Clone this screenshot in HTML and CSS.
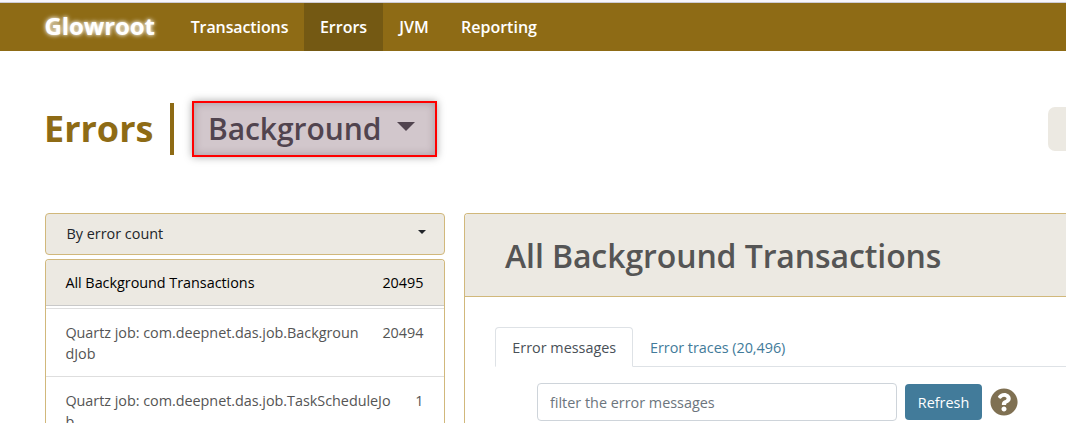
FILE: index.html
```html
<!DOCTYPE html>
<html lang="en">
<head>
<meta charset="utf-8">
<title>Glowroot</title>
<link rel="stylesheet" href="styles.css">
</head>
<body>
<nav class="navbar">
  <a class="brand">Glowroot</a>
  <a class="nav-item nav-transactions">Transactions</a>
  <a class="nav-item nav-errors active">Errors</a>
  <a class="nav-item nav-jvm">JVM</a>
  <a class="nav-item nav-reporting">Reporting</a>
</nav>
<header class="page-header">
  <h1 class="page-title">Errors</h1>
  <span class="divider"></span>
  <button class="type-button"><span class="type-label">Background</span><svg class="type-caret" width="18" height="9" viewBox="0 0 18 9"><path d="M0 0H18L9 9Z" fill="#51444f"/></svg></button>
  <span class="range-button"></span>
</header>
<main class="columns">
  <aside class="sidebar">
    <button class="sort-button"><span class="sort-label">By error count</span><svg width="8" height="4" viewBox="0 0 8 4"><path d="M0 0H8L4 4Z" fill="#212529"/></svg></button>
    <div class="list">
      <div class="row row-all"><span class="all-label">All Background Transactions</span><span>20495</span></div>
      <div class="row"><span>Quartz job: com.deepnet.das.job.Backgroun<br>dJob</span><span>20494</span></div>
      <div class="row"><span>Quartz job: com.deepnet.das.job.TaskScheduleJo<br>b</span><span>1</span></div>
    </div>
  </aside>
  <section class="panel">
    <div class="panel-header"><h2 class="panel-title">All Background Transactions</h2></div>
    <div class="tabs">
      <a class="tab tab-active">Error messages</a>
      <a class="tab tab-link">Error traces (20,496)</a>
    </div>
    <div class="filter">
      <input class="filter-input" type="text" placeholder="filter the error messages">
      <button class="refresh"><span>Refresh</span></button>
      <svg class="help" width="28" height="28" viewBox="0 0 512 512"><path fill="#7f7052" d="M504 256c0 136.997-111.043 248-248 248S8 392.997 8 256C8 119.083 119.043 8 256 8s248 111.083 248 248zM262.655 90c-54.497 0-89.255 22.957-116.549 63.758-3.536 5.286-2.353 12.415 2.715 16.258l34.699 26.31c5.205 3.947 12.621 3.008 16.665-2.122 17.864-22.658 30.113-35.797 57.303-35.797 20.429 0 45.698 13.148 45.698 32.958 0 14.976-12.363 22.667-32.534 33.976C247.128 238.528 216 254.941 216 296v4c0 6.627 5.373 12 12 12h56c6.627 0 12-5.373 12-12v-1.333c0-28.462 83.186-29.647 83.186-106.667 0-58.002-60.165-102-116.531-102zM256 338c-25.365 0-46 20.635-46 46 0 25.364 20.635 46 46 46s46-20.636 46-46c0-25.365-20.635-46-46-46z"/></svg>
    </div>
  </section>
</main>
</body>
</html>
```
FILE: styles.css
```css
* { box-sizing: border-box; }
html { overflow: hidden; }
body {
  margin: 0;
  height: 423px;
  overflow: hidden;
  background: #fff;
  border-top: 2px solid #f7f6fa;
  font: 14.4px/21px "Open Sans", "Noto Sans", sans-serif;
  color: #555;
}
button { font: inherit; margin: 0; padding: 0; }
h1, h2 { margin: 0; }
.navbar {
  display: flex;
  height: 49px;
  padding-left: 44.5px;
  border-top: 1px solid #cdccd5;
  background: #8e6b15;
  color: #fff;
}
.brand {
  width: 133.5px;
  font-size: 24px;
  font-weight: 700;
  line-height: 46px;
  letter-spacing: -.1px;
  text-shadow: 0 0 5px #fff, 0 0 3px rgba(255, 255, 255, .5);
}
.nav-item {
  font-size: 16px;
  font-weight: 600;
  line-height: 48px;
  text-align: center;
  white-space: nowrap;
}
.nav-transactions { width: 126px; padding-right: 3px; letter-spacing: -.1px; }
.nav-errors { width: 79px; }
.nav-jvm { width: 61px; padding-left: 1px; }
.nav-reporting { width: 110px; }
.active { background: #745913; }
.page-header {
  display: flex;
  height: 162px;
  padding-top: 50px;
  padding-left: 44px;
}
.page-title {
  width: 126px;
  flex: none;
  font-size: 36px;
  font-weight: 700;
  line-height: 56px;
  color: #8e6b15;
}
.divider {
  width: 4px;
  height: 52px;
  flex: none;
  margin: 2px 18px 0 0;
  background: #8e6b15;
}
.type-button {
  display: flex;
  align-items: center;
  width: 245px;
  height: 56px;
  flex: none;
  padding-left: 14px;
  border: 2px solid #f00;
  background: #d2c7cc;
  box-shadow: 0 0 8px rgba(0, 0, 0, .35), inset 0 0 9px rgba(70, 35, 55, .28);
  font-size: 30px;
  font-weight: 600;
  letter-spacing: -.07px;
  color: #51444f;
}
.type-label { width: 189px; text-align: left; line-height: 52px; }
.type-caret { margin-top: -6px; }
.range-button {
  width: 18px;
  height: 44px;
  margin: 6px 0 0 611px;
  flex: none;
  border-radius: 7px 0 0 7px;
  background: #ece9e2;
}
.columns { display: flex; gap: 19px; height: 210px; padding-left: 45px; overflow: hidden; }
.sidebar { width: 400px; flex: none; }
.sort-button {
  display: flex;
  align-items: center;
  justify-content: space-between;
  width: 400px;
  height: 42px;
  padding: 0 18px 0 20.5px;
  border: 1px solid #d1b87b;
  border-radius: 4px;
  background: #ece9e2;
  color: #212529;
}
.sort-label { margin-top: -1px; }
.sort-button svg { margin-top: -4px; }
.list {
  height: 164px;
  margin-top: 4px;
  border: 1px solid #d1b87b;
  border-bottom: 0;
  border-radius: 4px 4px 0 0;
  overflow: hidden;
}
.row {
  display: flex;
  justify-content: space-between;
  height: 68px;
  padding: 13px 20.6px 0 19.4px;
  border-bottom: 1px solid #dedede;
  letter-spacing: -.03px;
}
.row-all {
  height: 46px;
  padding-top: 12px;
  margin-bottom: 2px;
  background: #ece9e2;
  border-bottom-color: #c9c9c9;
  color: #000;
}
.row-all + .row { height: 69px; border-top: 1px solid #dedede; }
.panel {
  width: 602px;
  height: 210px;
  flex: none;
  border: 1px solid #d1b87b;
  border-width: 1px 0 0 1px;
  border-radius: 4px 0 0;
}
.panel-header {
  height: 83px;
  padding-left: 40px;
  border-bottom: 1px solid #d1b87b;
  background: #ece9e2;
  border-radius: 3px 0 0;
}
.panel-title {
  font-size: 32px;
  font-weight: 600;
  line-height: 83px;
  letter-spacing: -.1px;
  color: #555;
}
.tabs {
  display: flex;
  height: 40px;
  margin: 30px 0 0 30px;
  border-bottom: 1px solid #dee2e6;
}
.tab { height: 40px; line-height: 40px; }
.tab-active {
  width: 138px;
  padding-left: 16.3px;
  border: 1px solid #dee2e6;
  border-bottom-color: #fff;
  border-radius: 4px 4px 0 0;
  color: #495057;
}
.tab-link { padding-left: 17px; padding-top: 1px; letter-spacing: -.03px; color: #427b9a; }
.filter { display: flex; align-items: center; margin: 16px 0 0 72px; height: 38px; }
.filter-input {
  width: 360px;
  height: 38px;
  padding: 0 12px;
  border: 1px solid #ced4da;
  border-radius: 4px;
  font: inherit;
}
.filter-input::placeholder { color: #6c757d; opacity: 1; }
.refresh {
  width: 77px;
  height: 36px;
  margin-left: 8px;
  border: 0;
  border-radius: 4px;
  background: #427b9a;
  color: #fff;
}
.help { margin-left: 8px; }
```
